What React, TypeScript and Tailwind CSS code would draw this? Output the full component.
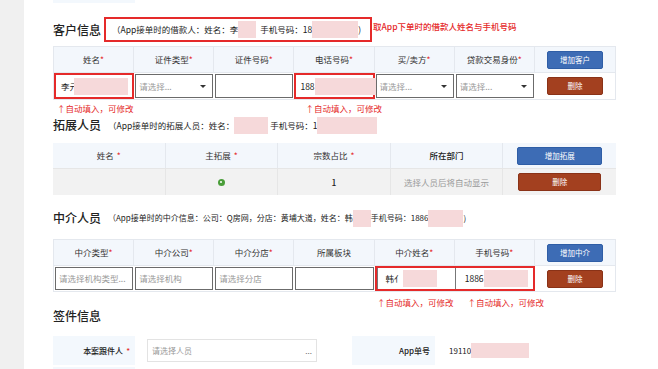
import type { ReactNode } from "react"

const Pink = ({ w, h = 17, className = "" }: { w: number; h?: number; className?: string }) => (
    <span className={`inline-block shrink-0 bg-[#f6d9da] align-middle ${className}`} style={{ width: w, height: h }} />
)

const Star = () => <span className="text-[#e52a2a]">*</span>

const HeadCell = ({ children, req }: { children: ReactNode; req?: boolean }) => (
    <div className="flex items-center justify-center border-r border-[#e4e8ee] text-[8.5px] text-[#333]">
        {children}
        {req && <Star />}
    </div>
)

const SelectBox = ({ placeholder }: { placeholder: string }) => (
    <div className="m-[1px] flex items-center justify-between border-[1.5px] border-[#6b6b6b] bg-white pl-[3px] pr-[6px] text-[8.5px] text-[#999]">
        <span>{placeholder}</span>
        <span className="h-0 w-0 border-x-[3px] border-t-[3px] border-x-transparent border-t-[#333]" />
    </div>
)

const TextBox = ({ children }: { children?: ReactNode }) => (
    <div className="m-[1px] flex items-center whitespace-nowrap border-[1.5px] border-[#6b6b6b] bg-white pl-[3px] text-[8.5px] text-[#999]">
        {children}
    </div>
)

const BlueBtn = ({ label, w = "w-[56px]" }: { label: string; w?: string }) => (
    <button className={`${w} h-[18px] rounded-[2px] border border-[#2f5ea6] bg-[#3d6cb5] text-[7.5px] text-white`}>
        {label}
    </button>
)

const BrownBtn = ({ label, w = "w-[56px]" }: { label: string; w?: string }) => (
    <button className={`${w} h-[18px] rounded-[2px] border border-[#8a3217] bg-[#a3401f] text-[7.5px] text-white`}>
        {label}
    </button>
)

const Hint = () => <span className="text-[8.5px] text-[#e52a2a]">↑自动填入，可修改</span>

export default function App() {
    return (
        <div
            className="flex h-[369px] w-[658px] overflow-hidden bg-white text-[#222]"
            style={{ fontFamily: '"Noto Sans CJK SC", "Noto Sans", sans-serif' }}
        >
            <div className="w-[24px] shrink-0 bg-[#f0f0f0]" />
            <div className="w-[634px] pl-[29px]">
                <div className="h-[3px] w-[82px] bg-[#f3f8fd]" />

                {/* 客户信息 */}
                <div className="mt-[14px] flex h-[25px] items-center">
                    <h2 className="w-[51px] text-[12px] font-medium leading-none">客户信息</h2>
                    <div className="flex h-[25px] w-[268px] items-center whitespace-nowrap border-2 border-[#e52a2a] pl-[6px] text-[8.5px] text-[#222]">
                        <span>（App接单时的借款人：姓名：李</span>
                        <Pink w={18} />
                        <span className="ml-[4px]">手机号码：18</span>
                        <Pink w={46} />
                        <span>)</span>
                    </div>
                    <span className="ml-[1px] -mt-[6px] whitespace-nowrap text-[8.5px] font-medium text-[#e52a2a]">
                        取App下单时的借款人姓名与手机号码
                    </span>
                </div>

                <div className="mt-[4px] w-[563px] border border-[#e4e8ee]">
                    <div className="grid h-[25px] grid-cols-7 bg-[#f3f7fc]">
                        <HeadCell req>姓名</HeadCell>
                        <HeadCell req>证件类型</HeadCell>
                        <HeadCell req>证件号码</HeadCell>
                        <HeadCell req>电话号码</HeadCell>
                        <HeadCell req>买/卖方</HeadCell>
                        <HeadCell req>贷款交易身份</HeadCell>
                        <div className="flex items-center justify-center">
                            <BlueBtn label="增加客户" />
                        </div>
                    </div>
                    <div className="grid h-[27px] grid-cols-7 border-t border-[#e4e8ee]">
                        <div className="flex items-center whitespace-nowrap border-2 border-[#e52a2a] pl-[5px] text-[8.5px] text-[#222]">
                            李亓
                            <Pink w={54} className="-ml-[4px]" />
                        </div>
                        <SelectBox placeholder="请选择..." />
                        <TextBox />
                        <div className="flex items-center whitespace-nowrap border-2 border-[#e52a2a] pl-[4px] text-[8.5px] text-[#222]">
                            188
                            <Pink w={62} />
                        </div>
                        <SelectBox placeholder="请选择..." />
                        <SelectBox placeholder="请选择..." />
                        <div className="flex items-center justify-center">
                            <BrownBtn label="删除" />
                        </div>
                    </div>
                </div>
                <div className="flex h-[10px] items-center">
                    <span className="ml-[4px]">
                        <Hint />
                    </span>
                    <span className="ml-[172px]">
                        <Hint />
                    </span>
                </div>

                {/* 拓展人员 */}
                <div className="mt-[5px] flex h-[20px] items-center">
                    <h2 className="w-[55px] text-[12px] font-medium leading-none">拓展人员</h2>
                    <span className="text-[8.5px]">（App接单时的拓展人员：姓名：</span>
                    <Pink w={34} />
                    <span className="ml-[2px] text-[8.5px]">手机号码：1</span>
                    <Pink w={60} />
                </div>

                <div className="mt-[8px] w-[563px]">
                    <div className="grid h-[25px] grid-cols-5 bg-[#f3f7fc]">
                        <HeadCell>
                            姓名<span className="ml-[3px] text-[#e52a2a]">*</span>
                        </HeadCell>
                        <HeadCell>
                            主拓展<span className="ml-[3px] text-[#e52a2a]">*</span>
                        </HeadCell>
                        <HeadCell>
                            宗数占比<span className="ml-[3px] text-[#e52a2a]">*</span>
                        </HeadCell>
                        <div className="flex items-center justify-center border-r border-[#e4e8ee] text-[8.5px] font-medium">
                            所在部门
                        </div>
                        <div className="flex items-center justify-center">
                            <BlueBtn label="增加拓展" w="w-[85px]" />
                        </div>
                    </div>
                    <div className="grid h-[27px] grid-cols-5 border-t border-[#e6e6e6] bg-[#f2f2f2]">
                        <div className="border-r border-[#e6e6e6]" />
                        <div className="flex items-center justify-center border-r border-[#e6e6e6]">
                            <span className="flex h-[7px] w-[7px] items-center justify-center rounded-full bg-[#4a9e3a]">
                                <span className="h-[2px] w-[2px] rounded-full bg-white" />
                            </span>
                        </div>
                        <div className="flex items-center justify-center border-r border-[#e6e6e6] text-[8.5px] font-medium">
                            1
                        </div>
                        <div className="flex items-center justify-center border-r border-[#e6e6e6] text-[8.5px] text-[#999]">
                            选择人员后将自动显示
                        </div>
                        <div className="flex items-center justify-center">
                            <BrownBtn label="删除" w="w-[83px]" />
                        </div>
                    </div>
                </div>

                {/* 中介人员 */}
                <div className="mt-[13px] flex h-[20px] items-center whitespace-nowrap">
                    <h2 className="w-[55px] text-[12px] font-medium leading-none">中介人员</h2>
                    <span className="text-[8px]">（App接单时的中介信息：公司：Q房网，分店：黄埔大道，姓名：韩</span>
                    <Pink w={18} />
                    <span className="text-[8px]">手机号码：1886</span>
                    <Pink w={35} />
                    <span className="text-[8px]">)</span>
                </div>

                <div className="mt-[11px] w-[563px] border border-[#e4e8ee]">
                    <div className="grid h-[25px] grid-cols-7 bg-[#f3f7fc]">
                        <HeadCell req>中介类型</HeadCell>
                        <HeadCell req>中介公司</HeadCell>
                        <HeadCell req>中介分店</HeadCell>
                        <HeadCell>所属板块</HeadCell>
                        <HeadCell req>中介姓名</HeadCell>
                        <HeadCell req>手机号码</HeadCell>
                        <div className="flex items-center justify-center">
                            <BlueBtn label="增加中介" />
                        </div>
                    </div>
                    <div className="grid h-[26px] grid-cols-7 border-t border-[#e4e8ee]">
                        <TextBox>请选择机构类型...</TextBox>
                        <TextBox>请选择机构</TextBox>
                        <TextBox>请选择分店</TextBox>
                        <TextBox />
                        <div className="col-span-2 grid grid-cols-2 border-2 border-[#e52a2a]">
                            <div className="flex items-center whitespace-nowrap border-l-[1.5px] border-[#777] pl-[8px] text-[8.5px] text-[#222]">
                                韩亻
                                <Pink w={34} />
                            </div>
                            <div className="flex items-center whitespace-nowrap border-l-[1.5px] border-[#777] pl-[9px] text-[8.5px] text-[#222]">
                                1886
                                <Pink w={44} />
                            </div>
                        </div>
                        <div className="flex items-center justify-center">
                            <BrownBtn label="删除" />
                        </div>
                    </div>
                </div>
                <div className="flex h-[14px] items-center">
                    <span className="ml-[324px]">
                        <Hint />
                    </span>
                    <span className="ml-[14px]">
                        <Hint />
                    </span>
                </div>

                {/* 签件信息 */}
                <div className="flex h-[20px] items-center">
                    <h2 className="text-[12px] font-medium leading-none">签件信息</h2>
                </div>

                <div className="mt-[10px] flex h-[29px] items-center">
                    <div className="flex h-[29px] w-[82px] items-center justify-end bg-[#f3f8fd] pr-[5px] text-[8px] font-medium">
                        本案跟件人<span className="ml-[3px] text-[#e52a2a]">*</span>
                    </div>
                    <div className="ml-[12px] flex h-[23px] w-[170px] items-center justify-between border border-[#e3e3e3] px-[4px] text-[8px] text-[#999]">
                        <span>请选择人员</span>
                        <span className="text-[#666]">...</span>
                    </div>
                    <div className="ml-[35px] flex h-[29px] w-[83px] items-center justify-end bg-[#f3f8fd] pr-[5px] text-[8px] font-medium">
                        App单号
                    </div>
                    <div className="ml-[14px] flex items-center text-[8px]">
                        19110
                        <Pink w={58} h={15} />
                    </div>
                </div>
                <div className="mt-[2px] h-[10px] w-[82px] bg-[#f3f8fd]" />
            </div>
        </div>
    )
}
